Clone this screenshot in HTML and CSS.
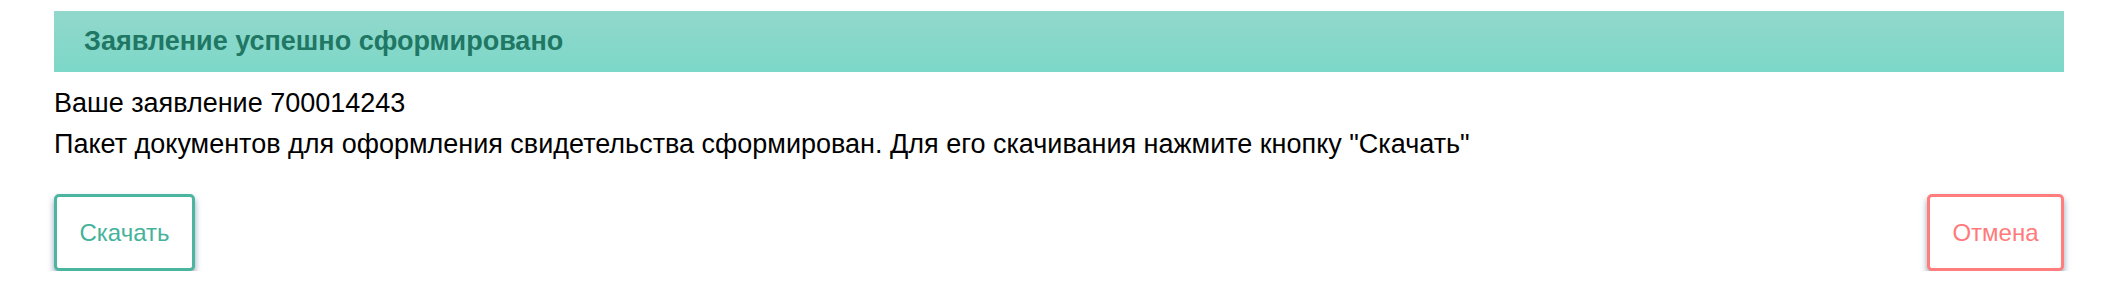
FILE: index.html
```html
<!DOCTYPE html>
<html>
	<head>
		<meta charset="utf-8">
		<title>Заявление</title>
		<link rel="stylesheet" href="styles.css">
	</head>
	<body>
		<div id="box">
			<!--заголовок-->
			<h3 class="title">Заявление успешно сформировано</h3>

			<p class="line">Ваше заявление 700014243</p>
			<p class="line">Пакет документов для оформления свидетельства сформирован. Для его скачивания нажмите кнопку "Скачать"</p>

			<!--кнопки-->
			<div class="buttons">
				<a href="#" class="btn download">Скачать</a>
				<a href="#" class="btn cancel">Отмена</a>
			</div>
		</div>
	</body>
</html>
```

FILE: styles.css
```css
* {
	margin: 0;
	padding: 0;
}

body {
	font-family: "Liberation Sans", Arial, sans-serif;
	background: #fff;
	color: #000;
}

#box {
	padding: 11px 56px 0 54px;
}

#box .title {
	height: 61px;
	line-height: 61px;
	padding-left: 30px;
	font-size: 27px;
	font-weight: bold;
	color: #1f7764;
	background: linear-gradient(#92d8cc, #7cd8c8);
}

#box .line {
	font-size: 27px;
	line-height: 30px;
	margin-top: 16px;
}

#box .line + .line {
	margin-top: 11px;
}

#box .buttons {
	display: flex;
	justify-content: space-between;
	margin-top: 35px;
}

#box .btn {
	display: flex;
	align-items: center;
	justify-content: center;
	height: 77px;
	box-sizing: border-box;
	border: 3px solid;
	border-radius: 5px;
	background: #fff;
	font-size: 24px;
	text-decoration: none;
	box-shadow: 0 4px 6px rgba(40, 70, 110, 0.5);
}

#box .download {
	width: 141px;
	color: #45b39b;
	border-color: #4cb5a0;
}

#box .cancel {
	width: 137px;
	color: #ff7b7b;
	border-color: #ff7d7d;
}
```
